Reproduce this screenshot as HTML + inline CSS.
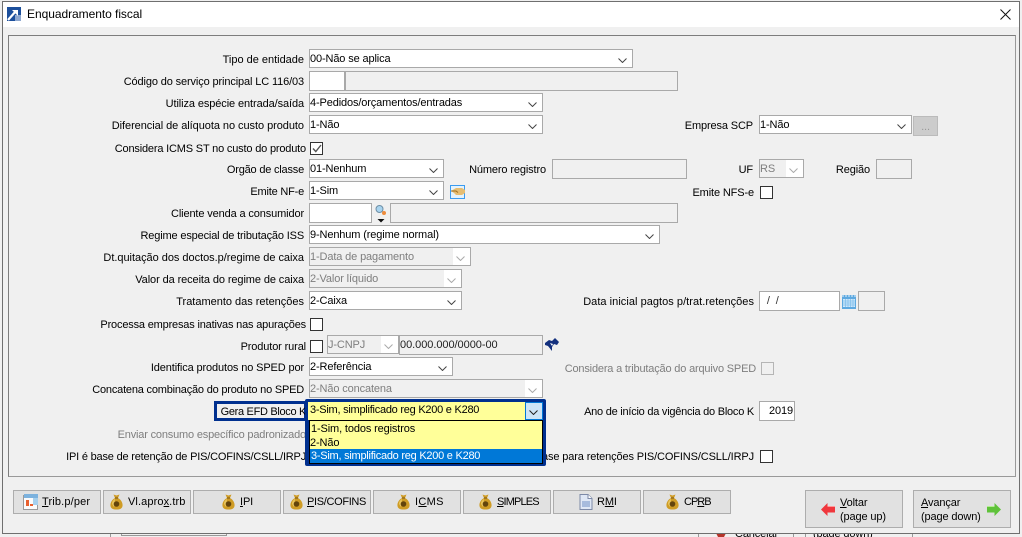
<!DOCTYPE html>
<html lang="pt"><head><meta charset="utf-8"><title>Enquadramento fiscal</title>
<style>
html,body{margin:0;padding:0;background:#f0f0f0}
#p{position:relative;width:1022px;height:537px;overflow:hidden;background:#f0f0f0;font:11px/14px "Liberation Sans",sans-serif;color:#000;letter-spacing:-.13px}
#p div,#p svg,#p span.a{position:absolute}
.l{white-space:nowrap;text-align:right;height:14px;margin-top:1px}
.f{box-sizing:border-box;border:1px solid #a9a9a9;background:#fff;white-space:nowrap;padding:2px 0 0 0;line-height:14px;overflow:hidden}
.d{background:#f0f0f0}
.g{color:#7e7e7e}
.w{background:#fff;top:0;right:0;width:17px;height:100%}
.k{box-sizing:border-box;border:1px solid #333;background:#fff;width:13px;height:13px}
.b{box-sizing:border-box;border:1px solid #adadad;background:#e1e1e1;white-space:nowrap;top:490px;height:24px;width:88px}
.b span{position:absolute;top:4px;white-space:nowrap}
.n{box-sizing:border-box;border:1px solid #adadad;background:#e1e1e1;top:490px;height:38px;width:98px;line-height:14px}
u{text-underline-offset:1px}
</style></head><body><div id="p">

<!-- behind window -->
<div style="left:110px;top:533px;width:1px;height:4px;background:#999"></div>
<div style="left:121px;top:533px;width:106px;height:3px;border:1px solid #999;border-top:0;box-sizing:border-box"></div>
<div style="left:698px;top:533px;width:96px;height:4px;border-left:1px solid #999;border-right:1px solid #999;box-sizing:border-box"></div>
<div style="left:805px;top:533px;width:108px;height:4px;border-left:1px solid #999;border-right:1px solid #999;box-sizing:border-box"></div>
<div style="left:735px;top:527px;height:14px;line-height:14px;white-space:nowrap">Cancelar</div>
<div style="left:813px;top:527px;height:14px;line-height:14px;white-space:nowrap">(page down)</div>
<svg style="left:714px;top:531px" width="14" height="6"><path d="M1 0l12 0-3 6H4z" fill="#b5342a"/></svg>

<!-- window -->
<div style="left:2px;top:1px;width:1018px;height:533px;box-sizing:border-box;border:1px solid #6f6f6f;background:#f0f0f0"></div>
<div style="left:3px;top:2px;width:1016px;height:25px;background:#fff"></div>
<svg style="left:7px;top:7px" width="14" height="14" viewBox="0 0 14 14"><rect width="14" height="14" fill="#1c4f9c"/><rect x="8" y="8" width="6" height="6" fill="#8fa8cf"/><path d="M1 13 9 4" stroke="#fff" stroke-width="2.2"/><path d="M5 3h6v6z" fill="#fff"/></svg>
<div style="left:27px;top:7px;font-size:12px;letter-spacing:-.05px;white-space:nowrap">Enquadramento fiscal</div>
<svg style="left:1000px;top:9px" width="11" height="11"><path d="M.5.5l10 10M10.5.5l-10 10" stroke="#111" stroke-width="1" fill="none"/></svg>

<!-- panel -->
<div style="left:8px;top:35px;width:1008px;height:442px;box-sizing:border-box;border:1px solid #7d7d7d;border-right-color:#999;border-bottom-color:#999;background:#f0f0f0"></div>

<!-- labels -->
<div class="l" style="right:718px;top:52px;letter-spacing:-.01px">Tipo de entidade</div>
<div class="l" style="right:718px;top:74px">Código do serviço principal LC 116/03</div>
<div class="l" style="right:718px;top:96px;letter-spacing:-.1px">Utiliza espécie entrada/saída</div>
<div class="l" style="right:718px;top:118px;letter-spacing:-.055px">Diferencial de alíquota no custo produto</div>
<div class="l" style="right:716px;top:141px;letter-spacing:-.18px">Considera ICMS ST no custo do produto</div>
<div class="l" style="right:718px;top:162px;letter-spacing:-.2px">Orgão de classe</div>
<div class="l" style="right:718px;top:184px;letter-spacing:-.2px">Emite NF-e</div>
<div class="l" style="right:718px;top:206px">Cliente venda a consumidor</div>
<div class="l" style="right:718px;top:228px;letter-spacing:-.16px">Regime especial de tributação ISS</div>
<div class="l" style="right:718px;top:250px;letter-spacing:-.03px">Dt.quitação dos doctos.p/regime de caixa</div>
<div class="l" style="right:718px;top:272px;letter-spacing:-.1px">Valor da receita do regime de caixa</div>
<div class="l" style="right:718px;top:294px;letter-spacing:-.01px">Tratamento das retenções</div>
<div class="l" style="right:716px;top:317px;letter-spacing:-.18px">Processa empresas inativas nas apurações</div>
<div class="l" style="right:716px;top:339px">Produtor rural</div>
<div class="l" style="right:718px;top:360px">Identifica produtos no SPED por</div>
<div class="l" style="right:718px;top:382px;letter-spacing:-.2px">Concatena combinação do produto no SPED</div>
<div class="l g" style="right:716px;top:427px;letter-spacing:-.18px">Enviar consumo específico padronizado</div>
<div class="l" style="right:716px;top:449px;letter-spacing:-.195px">IPI é base de retenção de PIS/COFINS/CSLL/IRPJ</div>

<div class="l" style="right:269px;top:118px">Empresa SCP</div>
<div class="l" style="right:476px;top:162px">Número registro</div>
<div class="l" style="right:269px;top:162px">UF</div>
<div class="l" style="right:152px;top:162px">Região</div>
<div class="l" style="right:268px;top:185px">Emite NFS-e</div>
<div class="l" style="right:268px;top:294px;letter-spacing:.04px">Data inicial pagtos p/trat.retenções</div>
<div class="l g" style="right:266px;top:361px;letter-spacing:-.18px">Considera a tributação do arquivo SPED</div>
<div class="l" style="right:268px;top:404px;letter-spacing:-.24px">Ano de início da vigência do Bloco K</div>
<div class="l" style="right:268px;top:449px">é base para retenções PIS/COFINS/CSLL/IRPJ</div>

<!-- fields -->
<div class="f" style="left:309px;top:49px;width:324px;height:19px">00-Não se aplica<svg style="right:5px;top:8px" width="9" height="5"><path d="M.5.5l4 4 4-4" fill="none" stroke="#444"/></svg></div>
<div class="f" style="left:309px;top:71px;width:36px;height:20px"></div>
<div class="f d" style="left:345px;top:71px;width:333px;height:20px"></div>
<div class="f" style="left:309px;top:93px;width:234px;height:19px">4-Pedidos/orçamentos/entradas<svg style="right:5px;top:8px" width="9" height="5"><path d="M.5.5l4 4 4-4" fill="none" stroke="#444"/></svg></div>
<div class="f" style="left:309px;top:115px;width:234px;height:19px">1-Não<svg style="right:5px;top:8px" width="9" height="5"><path d="M.5.5l4 4 4-4" fill="none" stroke="#444"/></svg></div>
<div class="f" style="left:759px;top:115px;width:153px;height:19px">1-Não<svg style="right:5px;top:8px" width="9" height="5"><path d="M.5.5l4 4 4-4" fill="none" stroke="#444"/></svg></div>
<div class="f" style="left:913px;top:116px;width:25px;height:20px;background:#ccc;border-color:#bbb;color:#999;text-align:center;padding:3px 0 0">...</div>
<div class="k" style="left:310px;top:142px"></div>
<svg style="left:312px;top:144px" width="10" height="9"><path d="M1 4.500l2.800 3L9 1" fill="none" stroke="#555" stroke-width="1.4"/></svg>
<div class="f" style="left:309px;top:159px;width:135px;height:19px">01-Nenhum<svg style="right:5px;top:8px" width="9" height="5"><path d="M.5.5l4 4 4-4" fill="none" stroke="#444"/></svg></div>
<div class="f d" style="left:552px;top:159px;width:135px;height:20px"></div>
<div class="f d g" style="left:759px;top:159px;width:45px;height:19px"><span>RS</span><div class="w"><svg style="right:5px;top:8px" width="9" height="5"><path d="M.5.5l4 4 4-4" fill="none" stroke="#aaa"/></svg></div></div>
<div class="f d" style="left:876px;top:159px;width:36px;height:20px"></div>

<div class="f" style="left:309px;top:181px;width:135px;height:19px">1-Sim<svg style="right:5px;top:8px" width="9" height="5"><path d="M.5.5l4 4 4-4" fill="none" stroke="#444"/></svg></div>
<svg style="left:450px;top:185px" width="15" height="14" viewBox="0 0 15 14"><rect x=".5" y=".5" width="14" height="13" fill="#e4f2fc" stroke="#3a9bf0"/><path d="M1 6l5-3h6l3 2v3l-3 2H6L4 8z" fill="#e6bd72"/><path d="M1 6l5 0 2 1.500" stroke="#9a6a1f" fill="none"/></svg>
<div class="k" style="left:760px;top:186px"></div>

<div class="f" style="left:309px;top:203px;width:63px;height:20px"></div>
<svg style="left:375px;top:204px" width="12" height="20" viewBox="0 0 12 20"><circle cx="4.500" cy="5" r="3.500" fill="#a9d4ef" stroke="#6d8ea5"/><circle cx="9" cy="9" r="2" fill="#ee8c3c"/><path d="M2.500 15h7l-3.500 3.500z" fill="#111"/></svg>
<div class="f d" style="left:390px;top:203px;width:288px;height:20px"></div>

<div class="f" style="left:309px;top:225px;width:351px;height:19px">9-Nenhum (regime normal)<svg style="right:5px;top:8px" width="9" height="5"><path d="M.5.5l4 4 4-4" fill="none" stroke="#444"/></svg></div>
<div class="f d g" style="left:309px;top:247px;width:162px;height:19px">1-Data de pagamento<div class="w"><svg style="right:5px;top:8px" width="9" height="5"><path d="M.5.5l4 4 4-4" fill="none" stroke="#aaa"/></svg></div></div>
<div class="f d g" style="left:309px;top:269px;width:153px;height:19px">2-Valor líquido<div class="w"><svg style="right:5px;top:8px" width="9" height="5"><path d="M.5.5l4 4 4-4" fill="none" stroke="#aaa"/></svg></div></div>
<div class="f" style="left:309px;top:291px;width:153px;height:19px">2-Caixa<svg style="right:5px;top:8px" width="9" height="5"><path d="M.5.5l4 4 4-4" fill="none" stroke="#444"/></svg></div>

<div class="f" style="left:759px;top:291px;width:81px;height:20px;padding-left:4px;color:#333">&nbsp;/&nbsp;&nbsp;/</div>
<svg style="left:842px;top:294px" width="14" height="15" viewBox="0 0 14 15"><rect y="1" width="14" height="14" fill="#5ea9e0"/><rect x="1" y="5" width="12" height="8" fill="#cfe8fb"/><path d="M1 7h12M1 9h12M1 11h12M3.500 5v8M6 5v8M8.500 5v8M11 5v8" stroke="#7dbdea" stroke-width=".7"/><path d="M1 1v2M4 1v2M7 1v2M10 1v2M13 1v2" stroke="#e7f3fc"/></svg>
<div class="f d" style="left:858px;top:291px;width:27px;height:20px"></div>

<div class="k" style="left:310px;top:318px"></div>
<div class="k" style="left:310px;top:340px"></div>
<div class="f d g" style="left:327px;top:335px;width:72px;height:19px">J-CNPJ<div class="w"><svg style="right:5px;top:8px" width="9" height="5"><path d="M.5.5l4 4 4-4" fill="none" stroke="#aaa"/></svg></div></div>
<div class="f d" style="left:399px;top:335px;width:144px;height:20px;color:#222;letter-spacing:-.05px">00.000.000/0000-00</div>
<svg style="left:545px;top:338px" width="14" height="13" viewBox="0 0 14 13"><path d="M0 5l4-3 3 1 3-3 4 4-2 3-3-1-2 3v4L3 8 0 7z" fill="#13307e"/><path d="M5 5l3 1-1 2z" fill="#fff"/></svg>

<div class="f" style="left:309px;top:357px;width:144px;height:19px">2-Referência<svg style="right:5px;top:8px" width="9" height="5"><path d="M.5.5l4 4 4-4" fill="none" stroke="#444"/></svg></div>
<div class="k" style="left:761px;top:362px;border-color:#b5b5b5;background:#f0f0f0"></div>
<div class="f d g" style="left:309px;top:379px;width:234px;height:19px">2-Não concatena<div class="w"><svg style="right:5px;top:8px" width="9" height="5"><path d="M.5.5l4 4 4-4" fill="none" stroke="#aaa"/></svg></div></div>
<div class="f" style="left:759px;top:401px;width:36px;height:20px;text-align:right;padding:2px 1px 0 0">2019</div>
<div class="k" style="left:760px;top:450px"></div>

<!-- highlight -->
<div style="left:214px;top:401px;width:93px;height:20px;box-sizing:border-box;border:3px solid #00308f;background:#f0f0f0"></div>
<div class="l" style="right:716px;top:404px;letter-spacing:-.32px">Gera EFD Bloco K</div>
<div style="left:305px;top:399px;width:241px;height:67px;box-sizing:border-box;border:3px solid #00308f;border-radius:2px;background:#00308f"></div>
<div style="left:308px;top:402px;width:235px;height:18px;background:#ffff99;white-space:nowrap;padding:1px 0 0 2px;box-sizing:border-box;letter-spacing:-.25px">3-Sim, simplificado reg K200 e K280</div>
<div style="left:525px;top:402px;width:18px;height:18px;box-sizing:border-box;border:1px solid #0078d7;background:#cce4f7"><svg style="left:3px;top:7px" width="9" height="5"><path d="M.5.5l4 4 4-4" fill="none" stroke="#222"/></svg></div>
<div style="left:309px;top:420px;width:234px;height:44px;box-sizing:border-box;border:1px solid #000;background:#ffff99">
  <div style="left:1px;top:1px;white-space:nowrap">1-Sim, todos registros</div>
  <div style="left:0;top:15px;white-space:nowrap">2-Não</div>
  <div style="left:0;top:28px;width:232px;height:14px;background:#0078d7;color:#fff;white-space:nowrap;padding-left:1px;box-sizing:border-box;letter-spacing:-.25px">3-Sim, simplificado reg K200 e K280</div>
</div>

<!-- buttons -->
<div class="b" style="left:13px"><svg style="left:9px;top:3px" width="16" height="16" viewBox="0 0 16 16"><rect x=".5" y="1.500" width="14" height="14" fill="#fbfbfb" stroke="#9a9a9a"/><rect x="1" y="0" width="14" height="4" fill="#7cb2de"/><rect x="10" y="4" width="5" height="7" fill="#a6d0ee"/><path d="M3 6h3v6H3zM7 10h3v2H7z" fill="#e8602f"/></svg><span style="left:28px;letter-spacing:.15px"><u>T</u>rib.p/per</span></div>
<div class="b" style="left:103px"><svg style="left:6px;top:3px" width="13" height="16" viewBox="0 0 13 16"><path d="M3.500 .5l3 1 3-1L8 4c3 1.500 5 5 4.500 8-.5 3-3 3.500-6 3.500S1 15 .5 12C0 9 2 5.500 5 4z" fill="#cf9c25"/><path d="M2 10c0-2 1-4 3-5l-1 8z" fill="#e9c65e"/><circle cx="6.500" cy="10" r="2.800" fill="#63440c"/><path d="M5 4h3" stroke="#7a5612"/></svg><span style="left:24px;letter-spacing:.1px">Vl.apro<u>x</u>.trb</span></div>
<div class="b" style="left:193px"><svg style="left:28px;top:3px" width="13" height="16" viewBox="0 0 13 16"><path d="M3.500 .5l3 1 3-1L8 4c3 1.500 5 5 4.500 8-.5 3-3 3.500-6 3.500S1 15 .5 12C0 9 2 5.500 5 4z" fill="#cf9c25"/><path d="M2 10c0-2 1-4 3-5l-1 8z" fill="#e9c65e"/><circle cx="6.500" cy="10" r="2.800" fill="#63440c"/><path d="M5 4h3" stroke="#7a5612"/></svg><span style="left:46px"><u>I</u>PI</span></div>
<div class="b" style="left:283px"><svg style="left:6px;top:3px" width="13" height="16" viewBox="0 0 13 16"><path d="M3.500 .5l3 1 3-1L8 4c3 1.500 5 5 4.500 8-.5 3-3 3.500-6 3.500S1 15 .5 12C0 9 2 5.500 5 4z" fill="#cf9c25"/><path d="M2 10c0-2 1-4 3-5l-1 8z" fill="#e9c65e"/><circle cx="6.500" cy="10" r="2.800" fill="#63440c"/><path d="M5 4h3" stroke="#7a5612"/></svg><span style="left:23px;letter-spacing:-.33px"><u>P</u>IS/COFINS</span></div>
<div class="b" style="left:373px"><svg style="left:23px;top:3px" width="13" height="16" viewBox="0 0 13 16"><path d="M3.500 .5l3 1 3-1L8 4c3 1.500 5 5 4.500 8-.5 3-3 3.500-6 3.500S1 15 .5 12C0 9 2 5.500 5 4z" fill="#cf9c25"/><path d="M2 10c0-2 1-4 3-5l-1 8z" fill="#e9c65e"/><circle cx="6.500" cy="10" r="2.800" fill="#63440c"/><path d="M5 4h3" stroke="#7a5612"/></svg><span style="left:41px;letter-spacing:.3px">I<u>C</u>MS</span></div>
<div class="b" style="left:463px"><svg style="left:15px;top:3px" width="13" height="16" viewBox="0 0 13 16"><path d="M3.500 .5l3 1 3-1L8 4c3 1.500 5 5 4.500 8-.5 3-3 3.500-6 3.500S1 15 .5 12C0 9 2 5.500 5 4z" fill="#cf9c25"/><path d="M2 10c0-2 1-4 3-5l-1 8z" fill="#e9c65e"/><circle cx="6.500" cy="10" r="2.800" fill="#63440c"/><path d="M5 4h3" stroke="#7a5612"/></svg><span style="left:33px;letter-spacing:-.85px"><u>S</u>IMPLES</span></div>
<div class="b" style="left:553px"><svg style="left:25px;top:3px" width="14" height="16" viewBox="0 0 14 16"><path d="M1 .5h8l4 4v11H1z" fill="#dfe7f5" stroke="#7d8aa8"/><path d="M9 .5v4h4" fill="#fff" stroke="#7d8aa8"/><rect x="3" y="7" width="8" height="6" fill="#a7bbdd"/></svg><span style="left:43px">R<u>M</u>I</span></div>
<div class="b" style="left:643px"><svg style="left:22px;top:3px" width="13" height="16" viewBox="0 0 13 16"><path d="M3.500 .5l3 1 3-1L8 4c3 1.500 5 5 4.500 8-.5 3-3 3.500-6 3.500S1 15 .5 12C0 9 2 5.500 5 4z" fill="#cf9c25"/><path d="M2 10c0-2 1-4 3-5l-1 8z" fill="#e9c65e"/><circle cx="6.500" cy="10" r="2.800" fill="#63440c"/><path d="M5 4h3" stroke="#7a5612"/></svg><span style="left:40px;letter-spacing:-1px">CP<u>R</u>B</span></div>

<div class="n" style="left:805px"><svg style="left:15px;top:12px" width="14" height="13" viewBox="0 0 14 13"><path d="M0 6.500 6.500 0v3.500H14v6H6.500V13z" fill="#f0373d"/><path d="M6.500 3.500H14" stroke="#ff9a9a"/></svg><div style="left:34px;top:5px;white-space:nowrap"><u>V</u>oltar<br>(page up)</div></div>
<div class="n" style="left:913px"><div style="left:7px;top:5px;white-space:nowrap"><u>A</u>vançar<br>(page down)</div><svg style="left:73px;top:12px" width="14" height="13" viewBox="0 0 14 13"><path d="M14 6.500 7.500 0v3.500H0v6h7.500V13z" fill="#5fc23a"/><path d="M0 3.500h7.500" stroke="#b4ec95"/></svg></div>

</div></body></html>
